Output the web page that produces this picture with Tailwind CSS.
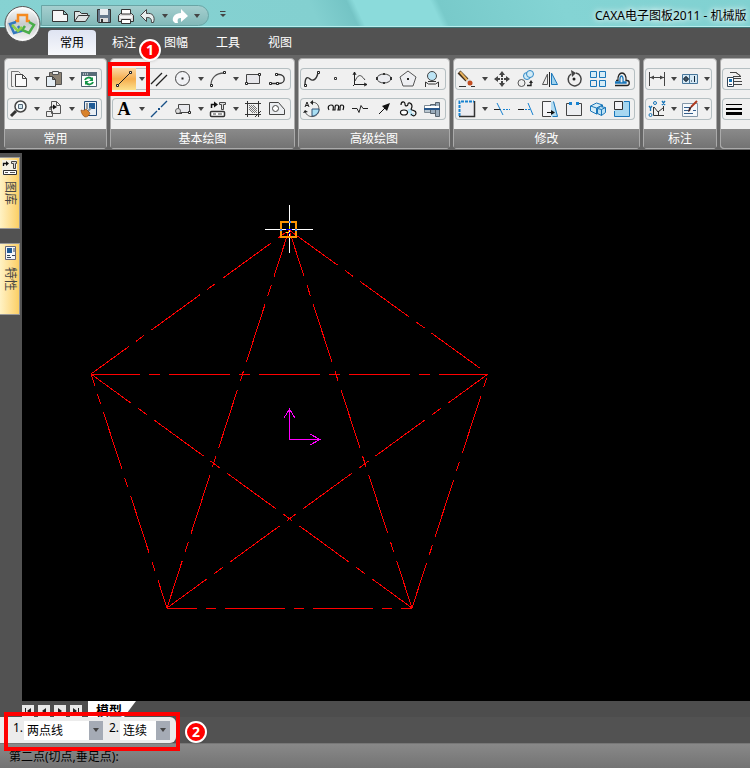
<!DOCTYPE html>
<html lang="zh-CN">
<head>
    <meta charset="UTF-8" />
    <meta name="viewport" content="width=device-width, initial-scale=1.0"/>
    <title>CAXA电子图板2011 - 机械版</title>
    <script src="https://cdn.jsdelivr.net/npm/@tailwindcss/browser@4"></script>
</head>
<body class="flex flex-col h-screen overflow-hidden bg-black text-xs text-black font-['Noto_Sans','Noto_Sans_CJK_SC',sans-serif]">

<svg class="hidden">
    <symbol id="caret" viewBox="0 0 6 4"><path d="M0 0h6L3 4z" fill="#444"/></symbol>
</svg>

<!-- Title bar -->
<header class="relative flex items-center shrink-0 h-7 pl-[41px] overflow-hidden whitespace-nowrap border-b border-[#3f7777] bg-linear-[65deg,#86d2d2_0%,#83d0d0_42%,#74c4c5_47%,#8bdbdb_48%,#8bdbdb_58%,#78caca_59%,#84d4d4_75%,#80d1d1_100%] shadow-[inset_0_-1px_#b8eded]">
    <div class="flex items-center h-[21px] w-[168px] mt-1 pl-2 shrink-0 rounded-r-full border border-[#69a5a5] bg-linear-to-b from-[#a5cfcf] to-[#82b9b9]">
        <button class="w-[22px]" aria-label="新建"><svg class="w-5 h-5" viewBox="0 0 20 20"><path d="M2.500 4.500h11l4 4v7h-15zM13.500 4.500v4h4" fill="#f6f6f6" stroke="#333"/></svg></button>
        <button class="w-[22px]" aria-label="打开"><svg class="w-5 h-5" viewBox="0 0 20 20"><path d="M2.500 15.500v-10h5l2 2h6v2h2l-4 6zM2.500 15.500l4-6h9" fill="#dfe3e3" stroke="#333"/></svg></button>
        <button class="w-[22px]" aria-label="保存"><svg class="w-5 h-5" viewBox="0 0 20 20"><path d="M3.500 3.500h13v13H4.500l-1-1z" fill="#66798c" stroke="#333"/><path d="M6 3h8v6H6z" fill="#e9edf0"/><path d="M6 12h8v4H6z" fill="#ddd"/><path d="M7 13h2v3H7z" fill="#333"/></svg></button>
        <button class="w-[22px]" aria-label="打印"><svg class="w-5 h-5" viewBox="0 0 20 20"><path d="M2.500 9.500l2-2h11l2 2v6h-15z" fill="#ddd" stroke="#333"/><path d="M5.500 8V3.500h9V8zM5.500 13.500h9v4h-9z" fill="#fff" stroke="#333"/><path d="M4 10h12v2H4z" fill="#f8f8f8"/></svg></button>
        <button class="w-[22px]" aria-label="撤销"><svg class="w-5 h-5" viewBox="0 0 20 20"><path d="M8.500 3.500v4c6-1 9 3 7 9h-2c0-4-1-5-5-5v4l-6-6z" fill="#e7eeee" stroke="#444"/></svg></button>
        <button class="w-2.5" aria-label="撤销列表"><svg class="w-[6px] h-1 mx-auto"><use href="#caret"/></svg></button>
        <button class="w-[22px]" aria-label="重做"><svg class="w-5 h-5" viewBox="0 0 20 20"><path d="M11 3v4c-6 0-9 4-8 8l2 2h3c-1-4 0-5 3-5v4l7-6z" fill="#fff"/></svg></button>
        <button class="w-2.5" aria-label="重做列表"><svg class="w-[6px] h-1 mx-auto"><use href="#caret"/></svg></button>
    </div>
    <button class="ml-2.5" aria-label="自定义快速访问工具栏"><svg class="w-2 h-2" viewBox="0 0 8 8"><path d="M1 1.500h5.500" stroke="#444"/><path d="M1 4h6L4 7z" fill="#444"/></svg></button>
    <h1 class="ml-[368px] mt-1 [text-shadow:0_0_5px_#fff,0_0_8px_#fff]">CAXA电子图板2011 - 机械版</h1>
</header>

<button class="absolute left-1 top-[5px] z-10" aria-label="主菜单">
    <svg class="w-[38px] h-[38px]" viewBox="0 0 38 38">
        <defs><linearGradient id="orb" x2="0" y2="1"><stop stop-color="#fff"/><stop offset=".5" stop-color="#c9cccd"/><stop offset="1" stop-color="#f8f8f8"/></linearGradient></defs>
        <circle cx="18.500" cy="19" r="17.500" fill="url(#orb)" stroke="#555"/>
        <circle cx="18.500" cy="19" r="16" fill="none" stroke="#fff" opacity=".7"/>
        <g fill="none" stroke-width="2.500"><path d="M11 16h3V10h9v6h3" stroke="#f58a1f"/><path d="M12 17l-6 2 4 9 7-2-3-5" stroke="#3277bd"/><path d="M25 17l5 3-5 8-7-3 3-4" stroke="#49ae49"/><path d="M8 20l6 6 4-4" stroke="#8ccf4d"/></g>
    </svg>
</button>

<!-- Ribbon tabs -->
<nav class="relative flex items-end shrink-0 h-[27px] pl-[46px] bg-[#525252] text-white" aria-label="功能区">
    <button class="w-12 mx-0.5 h-[25px] rounded-t bg-linear-to-b from-[#dfe4f2] to-[#f7f8fb] text-black">常用</button>
    <button class="w-[52px] h-[25px]">标注</button>
    <button class="w-[52px] h-[25px]">图幅</button>
    <button class="w-[52px] h-[25px]">工具</button>
    <button class="w-[52px] h-[25px]">视图</button>
    <span class="absolute left-[139px] top-[11px] z-20 flex items-center justify-center size-[22px] rounded-full border-2 border-white bg-[#f00] text-sm font-bold shadow">1</span>
</nav>

<!-- Ribbon panels -->
<div class="flex gap-[3px] shrink-0 h-[98px] pt-[3px] pl-1 pb-px border-b-3 border-black bg-[#666] overflow-hidden">
    <section class="flex flex-col w-[103px] shrink-0 rounded-sm border border-[#aaa] bg-[#f0f0f0]">
        <div class="flex flex-col gap-2 pt-[9px] pl-0.5 grow">
            <div class="flex items-center h-[22px] w-[95px] rounded-sm inset-ring inset-ring-[#b5bfc2]">
                <button class="w-6 flex justify-center" aria-label="复制"><svg class="w-5 h-5" viewBox="0 0 20 20"><path d="M2.500 15.500v-13h7l2 2M4.500 17.500h-2v-15" fill="none" stroke="#777"/><path d="M6.500 5.500h7l4 4v8h-11zM13.500 5.500v4h4" fill="#fafafa" stroke="#444"/></svg></button>
                <button class="w-[11px]" aria-label="复制选项"><svg class="w-[6px] h-1 mx-auto"><use href="#caret"/></svg></button>
                <button class="w-6 flex justify-center" aria-label="粘贴"><svg class="w-5 h-5" viewBox="0 0 20 20"><path d="M5.500 3.500h12v12h-12z" fill="#8c8273" stroke="#555"/><path d="M8.500 2.500h6v3h-6z" fill="#eee" stroke="#555"/><path d="M2.500 7.500h6l3 3v7h-9zM8.500 7.500v3h3" fill="#e4edf4" stroke="#444"/></svg></button>
                <button class="w-[11px]" aria-label="粘贴选项"><svg class="w-[6px] h-1 mx-auto"><use href="#caret"/></svg></button>
                <button class="w-6 flex justify-center" aria-label="刷新"><svg class="w-5 h-5" viewBox="0 0 20 20"><path d="M2.500 3.500h15v14h-15z" fill="#fff" stroke="#4d6370"/><path d="M2 3h16v4H2z" fill="#586c78"/><path d="M4 5h1M6 5h1M8 5h1" stroke="#fff"/><path d="M6 11c1-3 5-3 7-1M14 13c-1 3-5 3-7 1" fill="none" stroke="#149447" stroke-width="2"/><path d="M14 8v4h-4zM6 16v-4h4z" fill="#149447"/></svg></button>
            </div>
            <div class="flex items-center h-[22px] w-[95px] rounded-sm inset-ring inset-ring-[#b5bfc2]">
                <button class="w-6 flex justify-center" aria-label="缩放"><svg class="w-5 h-5" viewBox="0 0 20 20"><path d="M2 17l5-5" stroke="#333" stroke-width="3"/><circle cx="11.500" cy="7.500" r="5.500" fill="#f7fafa" stroke="#444" stroke-width="1.500"/><path d="M9.500 5.500h4v4h-4z" fill="#cfe6ee" stroke="#567"/></svg></button>
                <button class="w-[11px]" aria-label="缩放选项"><svg class="w-[6px] h-1 mx-auto"><use href="#caret"/></svg></button>
                <button class="w-6 flex justify-center" aria-label="移动复制"><svg class="w-5 h-5" viewBox="0 0 20 20"><path d="M7.500 2.500h5l4 4v8h-9zM12.500 2.500v4h4M2.500 12.500h6v5h-6z" fill="#eee" stroke="#555"/><path d="M6 11V8h4" fill="none" stroke="#111"/><path d="M9 5.500l4 2.500-4 2.500z" fill="#111"/></svg></button>
                <button class="w-[11px]" aria-label="移动选项"><svg class="w-[6px] h-1 mx-auto"><use href="#caret"/></svg></button>
                <button class="w-6 flex justify-center" aria-label="特性匹配"><svg class="w-5 h-5" viewBox="0 0 20 20"><path d="M5.500 2.500h12v14h-12z" fill="#e8eef4" stroke="#234a78"/><path d="M10 4h6v6h-6z" fill="#1e5a96"/><path d="M7 5h2M7 7h2M7 9h2" stroke="#444"/><path d="M12 9l-4 4" stroke="#8b98a0" stroke-width="2"/><path d="M2 11c2 1 4 0 5-1l4 4c-1 3-3 4-5 4-2-1-4-4-4-7z" fill="#d9822b" stroke="#8a4313" stroke-width=".6"/></svg></button>
            </div>
        </div>
        <h2 class="h-[19px] leading-[19px] text-center text-white bg-linear-to-b from-[#8a8a8a] to-[#737373]">常用</h2>
    </section>

    <section class="flex flex-col w-[185px] shrink-0 rounded-sm border border-[#aaa] bg-[#f0f0f0]">
        <div class="flex flex-col gap-2 pt-[9px] pl-px grow">
            <div class="relative flex items-center h-[22px] w-[179px] rounded-sm inset-ring inset-ring-[#b5bfc2]">
                <button class="w-6 h-[22px] flex items-center justify-center bg-linear-to-b from-[#fbd8a0] via-[#f5ae4d] to-[#fce08b]" aria-label="直线"><svg class="w-5 h-5" viewBox="0 0 20 20"><path d="M4 16L16 4" stroke="#222"/><path d="M2.500 15.500h2v2h-2zM15.500 2.500h2v2h-2z" fill="#fff" stroke="#222"/></svg></button>
                <button class="w-[11px]" aria-label="直线选项"><svg class="w-[6px] h-1 mx-auto"><use href="#caret"/></svg></button>
                <button class="w-6 flex justify-center" aria-label="平行线"><svg class="w-5 h-5" viewBox="0 0 20 20"><path d="M2 15L13 4M7 17L18 6" stroke="#222" stroke-width="1.300"/></svg></button>
                <button class="w-6 flex justify-center" aria-label="圆"><svg class="w-5 h-5" viewBox="0 0 20 20"><circle cx="9.500" cy="9.500" r="7" fill="#f1f2f5" stroke="#444"/><path d="M8.500 8.500h2v2h-2z" fill="#222"/></svg></button>
                <button class="w-[11px]" aria-label="圆选项"><svg class="w-[6px] h-1 mx-auto"><use href="#caret"/></svg></button>
                <button class="w-6 flex justify-center" aria-label="圆弧"><svg class="w-5 h-5" viewBox="0 0 20 20"><path d="M3 16C3 9 8 4 16 4" fill="none" stroke="#555" stroke-width="1.300"/><path d="M2.500 15.500h2v2h-2zM15.500 2.500h2v2h-2z" fill="#fff" stroke="#222"/></svg></button>
                <button class="w-[11px]" aria-label="圆弧选项"><svg class="w-[6px] h-1 mx-auto"><use href="#caret"/></svg></button>
                <button class="w-6 flex justify-center" aria-label="矩形"><svg class="w-5 h-5" viewBox="0 0 20 20"><path d="M3.500 5.500h13v9h-13z" fill="#e6e6ea" stroke="#444"/><path d="M2.500 13.500h2v2h-2zM15.500 4.500h2v2h-2z" fill="#fff" stroke="#222"/></svg></button>
                <button class="w-6 flex justify-center" aria-label="多段线"><svg class="w-5 h-5" viewBox="0 0 20 20"><path d="M3 14.500h9c7 0 7-9 0-9H9" fill="none" stroke="#333" stroke-width="1.300"/><path d="M2.500 13.500h2v2h-2zM9.500 13.500h2v2h-2zM8.500 4.500h2v2h-2z" fill="#fff" stroke="#222"/></svg></button>
                <span class="absolute -left-1 -top-[6px] z-10 w-[42px] h-[34px] border-4 border-[#f00]"></span>
            </div>
            <div class="flex items-center h-[22px] w-[179px] rounded-sm inset-ring inset-ring-[#b5bfc2]">
                <button class="w-6 text-lg leading-5 font-bold font-['Liberation_Serif',serif]" aria-label="文字">A</button>
                <button class="w-[11px]" aria-label="文字选项"><svg class="w-[6px] h-1 mx-auto"><use href="#caret"/></svg></button>
                <button class="w-6 flex justify-center" aria-label="中心线"><svg class="w-5 h-5" viewBox="0 0 20 20"><path d="M2 18l6-6M12 8l6-6" stroke="#174f86" stroke-width="1.400"/><path d="M9 9h2v2H9z" fill="#174f86"/></svg></button>
                <button class="w-6 flex justify-center" aria-label="轮廓线"><svg class="w-5 h-5" viewBox="0 0 20 20"><path d="M5.500 5.500h11v8h-11z" fill="#e8e9ed" stroke="#444"/><circle cx="5" cy="12" r="2.500" fill="#ddd" stroke="#666"/><path d="M3 14.500h6" stroke="#444"/><path d="M15.500 12.500h2v2h-2z" fill="#fff" stroke="#222"/></svg></button>
                <button class="w-[11px]" aria-label="轮廓选项"><svg class="w-[6px] h-1 mx-auto"><use href="#caret"/></svg></button>
                <button class="w-6 flex justify-center" aria-label="图库"><svg class="w-5 h-5" viewBox="0 0 20 20"><path d="M3.500 9V5.500H7" fill="none" stroke="#111" stroke-width="1.500"/><path d="M6 2.500l4 3-4 3z" fill="#111"/><path d="M11.500 3.500h6v2h-2v5h-2v-5h-2z" fill="#ddd" stroke="#444"/><rect x="2.500" y="12.500" width="14" height="5" rx="1" fill="#fff" stroke="#333" stroke-width="1.500"/><path d="M5 15h3M10 15h4" stroke="#444"/></svg></button>
                <button class="w-[11px]" aria-label="图库选项"><svg class="w-[6px] h-1 mx-auto"><use href="#caret"/></svg></button>
                <button class="w-6 flex justify-center" aria-label="剖面线"><svg class="w-5 h-5" viewBox="0 0 20 20"><path d="M2 4.500h16M2 15.500h16M4.500 2v16M15.500 2v16" stroke="#333"/><path d="M6 6l8 8M10 6l4 4M6 10l4 4M8 6l6 6M6 8l6 6" stroke="#777"/><path d="M12 18l6-6" stroke="#333"/></svg></button>
                <button class="w-6 flex justify-center" aria-label="填充"><svg class="w-5 h-5" viewBox="0 0 20 20"><path d="M2.500 3.500h9l6 7v5h-15z" fill="#eceef1" stroke="#444"/><circle cx="8.500" cy="9.500" r="3" fill="#fff" stroke="#444"/></svg></button>
            </div>
        </div>
        <h2 class="h-[19px] leading-[19px] text-center text-white bg-linear-to-b from-[#8a8a8a] to-[#737373]">基本绘图</h2>
    </section>

    <section class="flex flex-col w-[152px] shrink-0 rounded-sm border border-[#aaa] bg-[#f0f0f0]">
        <div class="flex flex-col gap-2 pt-[9px] pl-px grow">
            <div class="flex items-center h-[22px] w-[146px] rounded-sm inset-ring inset-ring-[#b5bfc2]">
                <button class="w-6 flex justify-center" aria-label="样条"><svg class="w-5 h-5" viewBox="0 0 20 20"><path d="M3 16C3 7 6 8 8 10s6 2 8-6" fill="none" stroke="#333" stroke-width="1.400"/><path d="M2.500 15.500h2v2h-2zM15.500 2.500h2v2h-2z" fill="#fff" stroke="#222"/></svg></button>
                <button class="w-6 flex justify-center" aria-label="点"><svg class="w-5 h-5" viewBox="0 0 20 20"><path d="M8.500 8.500h2v2h-2z" fill="#fff" stroke="#333"/></svg></button>
                <button class="w-6 flex justify-center" aria-label="公式曲线"><svg class="w-5 h-5" viewBox="0 0 20 20"><path d="M4.500 3v12.500H17M3 6l1.500-3L6 6M14 14l3 1.500-3 1.500M3 17l2-2" fill="none" stroke="#222"/><path d="M5 12c3-6 5-8 10-1" fill="none" stroke="#444"/></svg></button>
                <button class="w-6 flex justify-center" aria-label="椭圆"><svg class="w-5 h-5" viewBox="0 0 20 20"><ellipse cx="10" cy="9.500" rx="7" ry="4.500" fill="#ebecf0" stroke="#444"/><path d="M2 8h2v3H2zM16 8h2v3h-2zM9 4h2v2H9zM9 13h2v2H9z" fill="#333"/></svg></button>
                <button class="w-6 flex justify-center" aria-label="正多边形"><svg class="w-5 h-5" viewBox="0 0 20 20"><path d="M10 2l8 6-3 9H5L2 8z" fill="#eeeff2" stroke="#555"/><path d="M9 9h2v2H9z" fill="#222"/></svg></button>
                <button class="w-6 flex justify-center" aria-label="局部放大"><svg class="w-5 h-5" viewBox="0 0 20 20"><circle cx="10" cy="7" r="4.500" fill="#bce4f5" stroke="#444"/><path d="M3.500 18v-5l3 2h7l3-2v5M6 12.500h8" fill="none" stroke="#333"/></svg></button>
            </div>
            <div class="flex items-center h-[22px] w-[146px] rounded-sm inset-ring inset-ring-[#b5bfc2]">
                <button class="w-6 flex justify-center" aria-label="局部视图"><svg class="w-5 h-5" viewBox="0 0 20 20"><path d="M3 8l2-5 2 5M4 6.500h2" fill="none" stroke="#222"/><path d="M9 3.500c5-1 8 2 8 7 0 8-11 10-14 2" fill="none" stroke="#555"/><path d="M10 10h7c0 4-3 7-7 7z" fill="#a9dff4" stroke="#357"/><path d="M11 1v5L8 3.500zM1 14l2-3 3 2z" fill="#222"/></svg></button>
                <button class="w-6 flex justify-center" aria-label="波浪线"><svg class="w-5 h-5" viewBox="0 0 20 20"><path d="M3 11c-2-3 0-5 2-5s3 1 2 5h2c0-4 0-5 2-5s2 2 1 5h2c0-4 0-5 2-5s2 2 1 5" fill="none" stroke="#111" stroke-width="1.200"/></svg></button>
                <button class="w-6 flex justify-center" aria-label="双折线"><svg class="w-5 h-5" viewBox="0 0 20 20"><path d="M2 9.500h5l2 4 2-7 2 3h5" fill="none" stroke="#222"/></svg></button>
                <button class="w-6 flex justify-center" aria-label="箭头"><svg class="w-5 h-5" viewBox="0 0 20 20"><path d="M5 15l7-7" stroke="#111"/><path d="M16 4l-3 8-5-5z" fill="#111"/></svg></button>
                <button class="w-6 flex justify-center" aria-label="云线"><svg class="w-5 h-5" viewBox="0 0 20 20"><path d="M10 10h4v4h-4zM12 14h4v3h-4z" fill="#bce4f5"/><path d="M3 6c0-4 4-4 4-1s3 2 3 0 4-1 4 2-2 3 0 4 4 0 4 3-3 4-5 1" fill="none" stroke="#111" stroke-width="1.200"/><ellipse cx="6" cy="13.500" rx="3.500" ry="2.500" fill="#fff" stroke="#111" stroke-width="1.200"/></svg></button>
                <button class="w-6 flex justify-center" aria-label="孔轴"><svg class="w-5 h-5" viewBox="0 0 20 20"><path d="M2.500 6.500h6v7h-6z" fill="#b9c6d0" stroke="#7d8993"/><path d="M8.500 5.500h5v9h-5zM13.500 3.500h4v14h-4z" fill="#9bacbb" stroke="#59656f"/><path d="M2 10h16" stroke="#27568a" stroke-width="2"/><path d="M3 8h14" stroke="#fff" stroke-width="2"/></svg></button>
            </div>
        </div>
        <h2 class="h-[19px] leading-[19px] text-center text-white bg-linear-to-b from-[#8a8a8a] to-[#737373]">高级绘图</h2>
    </section>

    <section class="flex flex-col w-[187px] shrink-0 rounded-sm border border-[#aaa] bg-[#f0f0f0]">
        <div class="flex flex-col gap-2 pt-[9px] pl-px grow">
            <div class="flex items-center h-[22px] w-[180px] rounded-sm inset-ring inset-ring-[#b5bfc2]">
                <button class="w-6 flex justify-center" aria-label="删除"><svg class="w-5 h-5" viewBox="0 0 20 20"><path d="M2 3l8 8" stroke="#3c2a18" stroke-width="4"/><path d="M3 3l8 9" stroke="#e6b15c" stroke-width="2"/><path d="M9 13l4-3" stroke="#ddd" stroke-width="2"/><circle cx="13" cy="14" r="2.500" fill="#c24c20"/><path d="M2 17.500h7M14 17.500h4" stroke="#333"/></svg></button>
                <button class="w-[11px]" aria-label="删除选项"><svg class="w-[6px] h-1 mx-auto"><use href="#caret"/></svg></button>
                <button class="w-6 flex justify-center" aria-label="平移"><svg class="w-5 h-5" viewBox="0 0 20 20"><path d="M10 2l3 4H7zM10 18l3-4H7zM2 10l4-3v6zM18 10l-4-3v6z" fill="#444"/><path d="M10 5v3M10 12v3M5 10h3M12 10h3" stroke="#444" stroke-width="2"/><path d="M9 9h2v2H9z" fill="#444"/></svg></button>
                <button class="w-6 flex justify-center" aria-label="平移复制"><svg class="w-5 h-5" viewBox="0 0 20 20"><circle cx="11" cy="7" r="3.500" fill="#d2ebf6" stroke="#3089c7"/><circle cx="14" cy="5" r="3.500" fill="#d2ebf6" stroke="#3089c7"/><circle cx="5.500" cy="14" r="3.500" fill="#eee" stroke="#555"/><path d="M11 16.500h4v-3" fill="none" stroke="#222" stroke-width="1.400"/><path d="M13 14l2-3 2 3z" fill="#222"/></svg></button>
                <button class="w-6 flex justify-center" aria-label="镜像"><svg class="w-5 h-5" viewBox="0 0 20 20"><path d="M7.500 5v10.500h-5z" fill="#eee" stroke="#555"/><path d="M11.500 4v11.500h6z" fill="#9fd2ee" stroke="#1976b9"/><path d="M9.500 3v15" stroke="#222"/></svg></button>
                <button class="w-6 flex justify-center" aria-label="旋转"><svg class="w-5 h-5" viewBox="0 0 20 20"><path d="M12 4a6.500 6.500 0 1 1-5 1" fill="none" stroke="#444" stroke-width="1.500"/><path d="M7 1l5 3-4 4z" fill="#444"/><circle cx="10" cy="10" r="1.500" fill="#222"/></svg></button>
                <button class="w-6 flex justify-center" aria-label="阵列"><svg class="w-5 h-5" viewBox="0 0 20 20"><path d="M2.500 2.500h6v6h-6zM11.500 2.500h6v6h-6zM11.500 11.500h6v6h-6z" fill="#d5ecf7" stroke="#1976b9"/><path d="M2.500 11.500h6v6h-6z" fill="#eee" stroke="#1976b9"/></svg></button>
                <button class="w-6 flex justify-center" aria-label="等距线"><svg class="w-5 h-5" viewBox="0 0 20 20"><path d="M3 16.500h12c3 0 3-5 0-5h-1c1-10-9-10-8 0H4" fill="none" stroke="#222" stroke-width="1.300"/><path d="M3 14h11v-1h-3c1-8-4-8-3 0H3" fill="none" stroke="#1976b9" stroke-width="1.300"/></svg></button>
            </div>
            <div class="flex items-center h-[22px] w-[180px] rounded-sm inset-ring inset-ring-[#b5bfc2]">
                <button class="w-6 flex justify-center" aria-label="裁剪"><svg class="w-5 h-5" viewBox="0 0 20 20"><path d="M2.500 2.500h15v15h-15z" fill="#ececf0"/><path d="M17.500 2v15.500H2" fill="none" stroke="#333" stroke-width="1.500"/><path d="M2.500 17V2.500H17" fill="none" stroke="#1681d0" stroke-width="2" stroke-dasharray="3 1"/></svg></button>
                <button class="w-[11px]" aria-label="裁剪选项"><svg class="w-[6px] h-1 mx-auto"><use href="#caret"/></svg></button>
                <button class="w-6 flex justify-center" aria-label="过渡"><svg class="w-5 h-5" viewBox="0 0 20 20"><path d="M2 10.500h7" stroke="#222"/><path d="M11 10.500h7" stroke="#1681d0" stroke-dasharray="2 1"/><path d="M5 4l6 12" stroke="#1681d0"/></svg></button>
                <button class="w-6 flex justify-center" aria-label="延伸"><svg class="w-5 h-5" viewBox="0 0 20 20"><path d="M2 10.500h6" stroke="#222"/><path d="M9 10.500h5" stroke="#1681d0" stroke-dasharray="2 1"/><path d="M12 4l5 12" stroke="#1681d0"/></svg></button>
                <button class="w-6 flex justify-center" aria-label="拉伸"><svg class="w-5 h-5" viewBox="0 0 20 20"><path d="M11 2.500h3l4 15h-7z" fill="#b4dcf1"/><path d="M13.500 2.500l4 15h-5" fill="none" stroke="#1976b9"/><path d="M11 17.500H2.500V2.500H11" fill="#f5f5f7" stroke="#444"/><path d="M7 13.500h5" stroke="#111"/><path d="M11 11l4 2.500-4 2.500z" fill="#111"/></svg></button>
                <button class="w-6 flex justify-center" aria-label="打断"><svg class="w-5 h-5" viewBox="0 0 20 20"><path d="M6 4.500H2.500v12h15v-12H14" fill="#eceef1" stroke="#444"/><path d="M5 3h3v3H5zM12 3h3v3h-3z" fill="#1681d0"/></svg></button>
                <button class="w-6 flex justify-center" aria-label="分解"><svg class="w-5 h-5" viewBox="0 0 20 20"><path d="M2.500 7l6-3 6 2v7l-6 2-6-3zM2.500 7l6 2v6M8.500 9l6-3" fill="#d5ecf7" stroke="#1976b9"/><path d="M9.500 9.500l3-2 5 1v5l-4 3-4-2zM9.500 9.500l4 1v6M13.500 10.500l4-2" fill="#bce0f3" stroke="#1976b9"/></svg></button>
                <button class="w-6 flex justify-center" aria-label="缩放"><svg class="w-5 h-5" viewBox="0 0 20 20"><path d="M2.500 2.500h15v15h-15z" fill="#a6d7f0"/><path d="M12 2.500h5.500v15h-15V12" fill="none" stroke="#1976b9"/><path d="M2.500 2.500h8v8h-8z" fill="#f2f2f5" stroke="#333"/></svg></button>
            </div>
        </div>
        <h2 class="h-[19px] leading-[19px] text-center text-white bg-linear-to-b from-[#8a8a8a] to-[#737373]">修改</h2>
    </section>

    <section class="flex flex-col w-[74px] shrink-0 rounded-sm border border-[#aaa] bg-[#f0f0f0]">
        <div class="flex flex-col gap-2 pt-[9px] pl-px grow">
            <div class="flex items-center h-[22px] w-[67px] rounded-sm inset-ring inset-ring-[#b5bfc2]">
                <button class="w-6 flex justify-center" aria-label="尺寸标注"><svg class="w-5 h-5" viewBox="0 0 20 20"><path d="M2.500 3v14M17.500 3v14M3 8.500h14" stroke="#444"/><path d="M3 8.500l4-2v4zM17 8.500l-4-2v4z" fill="#444"/></svg></button>
                <button class="w-[9px]" aria-label="尺寸选项"><svg class="w-[6px] h-1 mx-auto"><use href="#caret"/></svg></button>
                <button class="w-6 flex justify-center" aria-label="形位公差"><svg class="w-5 h-5" viewBox="0 0 20 20"><path d="M2.500 5.500h15v9h-15zM9.500 5v9" fill="#d4e8f5" stroke="#48769a"/><circle cx="6" cy="10" r="2" fill="none" stroke="#123"/><path d="M3 10h6M6 7v6M14.500 7v6M11 12h1" stroke="#123"/></svg></button>
                <button class="w-[9px]" aria-label="公差选项"><svg class="w-[6px] h-1 mx-auto"><use href="#caret"/></svg></button>
            </div>
            <div class="flex items-center h-[22px] w-[67px] rounded-sm inset-ring inset-ring-[#b5bfc2]">
                <button class="w-6 flex justify-center" aria-label="坐标标注"><svg class="w-5 h-5" viewBox="0 0 20 20"><path d="M6.500 8v8.500H17M7 8l4 5 5-4M11.500 12v4M16.500 7v5" fill="none" stroke="#333"/><path d="M15 2l3 4M18 2l-3 4M2 7l1.500 2L5 7M3.500 9v3" stroke="#1976b9" stroke-width="1.300" fill="none"/><circle cx="8" cy="4" r="1.500" fill="none" stroke="#1976b9"/><circle cx="3.500" cy="16" r="1.500" fill="none" stroke="#1976b9"/></svg></button>
                <button class="w-[9px]" aria-label="坐标选项"><svg class="w-[6px] h-1 mx-auto"><use href="#caret"/></svg></button>
                <button class="w-6 flex justify-center" aria-label="标注编辑"><svg class="w-5 h-5" viewBox="0 0 20 20"><path d="M2.500 4.500h15v13h-15z" fill="#f5f8fb" stroke="#8497a8"/><path d="M4 8.500h6M4 11.500h5M4 14.500h9M13 11.500h3" stroke="#345e8c"/><path d="M17 2l-6 6" stroke="#b03a1e" stroke-width="2"/><path d="M12 7l-2 5-2 1 1-4z" fill="#422"/></svg></button>
                <button class="w-[9px]" aria-label="编辑选项"><svg class="w-[6px] h-1 mx-auto"><use href="#caret"/></svg></button>
            </div>
        </div>
        <h2 class="h-[19px] leading-[19px] text-center text-white bg-linear-to-b from-[#8a8a8a] to-[#737373]">标注</h2>
    </section>

    <section class="flex flex-col grow min-w-0 rounded-l-sm border border-r-0 border-[#aaa] bg-[#f0f0f0] overflow-hidden">
        <div class="flex flex-col gap-2 pt-[9px] pl-px grow">
            <div class="flex items-center h-[22px] w-40 rounded-sm inset-ring inset-ring-[#b5bfc2]">
                <button class="w-6 flex justify-center" aria-label="图层"><svg class="w-5 h-5" viewBox="0 0 20 20"><path d="M6 3.500h6l5 4H9M9 9.500h8M9 12.500h9M12 3.500l4 3M10 15.500h8" fill="none" stroke="#444"/><path d="M3.500 8.500h6v9h-6z" fill="#fff" stroke="#345"/><path d="M5 10h3v3H5z" fill="#1976b9"/><path d="M5 15.500h3" stroke="#345"/></svg></button>
            </div>
            <div class="flex items-center h-[22px] w-40 rounded-sm inset-ring inset-ring-[#b5bfc2]">
                <button class="w-6 flex justify-center" aria-label="线宽"><svg class="w-5 h-5" viewBox="0 0 20 20"><path d="M2 5h16v1H2zM2 9h16v2H2zM2 13h16v3H2z" fill="#000"/></svg></button>
            </div>
        </div>
        <div class="h-[19px] bg-linear-to-b from-[#8a8a8a] to-[#737373]"></div>
    </section>
</div>

<!-- Workspace -->
<div class="flex grow min-h-0">
    <aside class="flex flex-col gap-[14px] w-[22px] shrink-0 pt-1 bg-[#525252]">
        <button class="flex flex-col items-center gap-[5px] w-5 h-[72px] border border-l-0 border-[#999] bg-linear-to-r from-[#fff2c4] to-[#fccf62] text-[#444]">
            <svg class="w-[18px] h-[18px] shrink-0" viewBox="0 0 18 18"><path d="M1 2h15v15H1z" fill="#f4f1e4"/><path d="M2.500 8V5.500H5" fill="none" stroke="#111" stroke-width="1.300"/><path d="M5 3l3 2.500L5 8z" fill="#111"/><path d="M10.500 3.500h5v2h-1v5h-2v-5h-2z" fill="#ddd" stroke="#444"/><path d="M2.500 12.500h13v4h-13z" fill="#fff" stroke="#333"/><path d="M4 14.500h3M9 14.500h5" stroke="#555"/></svg>
            <span class="[writing-mode:vertical-rl] [text-orientation:sideways] leading-5">图库</span>
        </button>
        <button class="flex flex-col items-center gap-[5px] w-5 h-[72px] border border-l-0 border-[#999] bg-linear-to-r from-[#fff2c4] to-[#fccf62] text-[#444]">
            <svg class="w-[18px] h-[18px] shrink-0" viewBox="0 0 18 18"><path d="M4.500 2.500h10v13h-10z" fill="#f2f5f8" stroke="#667"/><path d="M6 4h5v5H6z" fill="#1e5a96"/><path d="M12 5h2M12 7h2M6 11.500h3M6 13.500h4M11 11.500h3" stroke="#345"/></svg>
            <span class="[writing-mode:vertical-rl] [text-orientation:sideways] leading-5">特性</span>
        </button>
    </aside>
    <main class="flex flex-col grow min-w-0">
        <div class="grow min-h-0 overflow-hidden bg-black">
            <svg class="w-[728px] h-[548px]" viewBox="22 153 728 548" fill="none" shape-rendering="crispEdges" role="img" aria-label="五角星图形">
                <!-- centre-line pattern: long dash, gap, short dash, gap -->
                <g stroke="#f00" stroke-dasharray="61 9 11 9">
                    <path d="M91 374.500H488M289 230L167 608M289 230L412 608M91 374L412 608M488 374L167 608" stroke-dashoffset="12"/>
                </g>
                <g stroke="#f00" stroke-dasharray="60 9 10 9">
                    <path d="M167 608.500H412M167 608L91 374" stroke-dashoffset="30"/>
                    <path d="M412 608L488 374" stroke-dashoffset="13"/>
                    <path d="M289 230L488 374"/>
                    <path d="M289 230L91 374" stroke-dashoffset="66"/>
                </g>
                <path d="M289.500 409v30.500H320M284 418l5.500-9 5.500 9M310 434l10 5.500-10 5.500" stroke="#f0f"/>
                <path d="M289.500 205v48M265 229.500h48" stroke="#fff"/>
                <path d="M281 222h15v15h-15z" stroke="#ff9500" stroke-width="2"/>
                <path d="M289.500 226v5M286 232h3" stroke="#ff0"/>
                <path d="M286 229.500h6M289.500 232v2" stroke="#00f"/>
                <path d="M280 229.500h2M295 229.500h2M289.500 221v2" stroke="#3b82f6" stroke-width="2"/>
            </svg>
        </div>
        <div class="flex items-end gap-1 shrink-0 h-4 bg-[#4d4d4d]">
            <button class="flex items-center justify-center w-3 h-3 bg-[#e8e8e8]" aria-label="第一个"><svg class="w-2 h-2" viewBox="0 0 8 8"><path d="M1 1h1v6H1zM7 1v6L3 4z" fill="#222"/></svg></button>
            <button class="flex items-center justify-center w-3 h-3 bg-[#e8e8e8]" aria-label="上一个"><svg class="w-2 h-2" viewBox="0 0 8 8"><path d="M6 1v6L2 4z" fill="#222"/></svg></button>
            <button class="flex items-center justify-center w-3 h-3 bg-[#e8e8e8]" aria-label="下一个"><svg class="w-2 h-2" viewBox="0 0 8 8"><path d="M2 1v6l4-3z" fill="#222"/></svg></button>
            <button class="flex items-center justify-center w-3 h-3 bg-[#e8e8e8]" aria-label="最后一个"><svg class="w-2 h-2" viewBox="0 0 8 8"><path d="M6 1h1v6H6zM1 1v6l4-3z" fill="#222"/></svg></button>
            <button class="h-4 w-12 pl-2 ml-0.5 leading-[18px] text-[13px] text-left font-bold bg-white [clip-path:polygon(0_0,100%_0,75%_100%,0_100%)]">模型</button>
        </div>
    </main>
</div>

<!-- Option bar -->
<form class="relative flex shrink-0 h-[27px] bg-[#525252] border-b border-[#777]">
    <div class="flex items-center w-[176px] pl-[13px] rounded-r-md bg-[#ececec]">
        <label for="lineType" class="w-[11px] mb-1">1.</label>
        <div class="relative">
            <select id="lineType" class="appearance-none block w-[79px] h-[19px] pl-[3px] leading-[19px] bg-white">
                <option>两点线</option>
            </select>
            <span class="absolute right-0 top-0 flex items-center justify-center w-[14px] h-[19px] bg-[#a5abb5] pointer-events-none"><svg class="w-[6px] h-1"><use href="#caret"/></svg></span>
        </div>
        <label for="lineMode" class="w-[11px] mb-1 ml-[6px]">2.</label>
        <div class="relative">
            <select id="lineMode" class="appearance-none block w-[50px] h-[19px] pl-[3px] leading-[19px] bg-white">
                <option>连续</option>
            </select>
            <span class="absolute right-0 top-0 flex items-center justify-center w-[14px] h-[19px] bg-[#a5abb5] pointer-events-none"><svg class="w-[6px] h-1"><use href="#caret"/></svg></span>
        </div>
    </div>
    <span class="absolute left-1 -top-[5px] z-10 w-[176px] h-[39px] border-4 border-[#f00] pointer-events-none"></span>
    <span class="absolute left-[185px] top-1 flex items-center justify-center size-[22px] rounded-full border-2 border-white bg-[#f00] text-sm font-bold text-white shadow">2</span>
</form>

<!-- Command line -->
<footer class="shrink-0 h-6 pl-[9px] leading-[26px] bg-linear-to-b from-[#898989] to-[#737373]">第二点(切点,垂足点):</footer>

</body>
</html>
